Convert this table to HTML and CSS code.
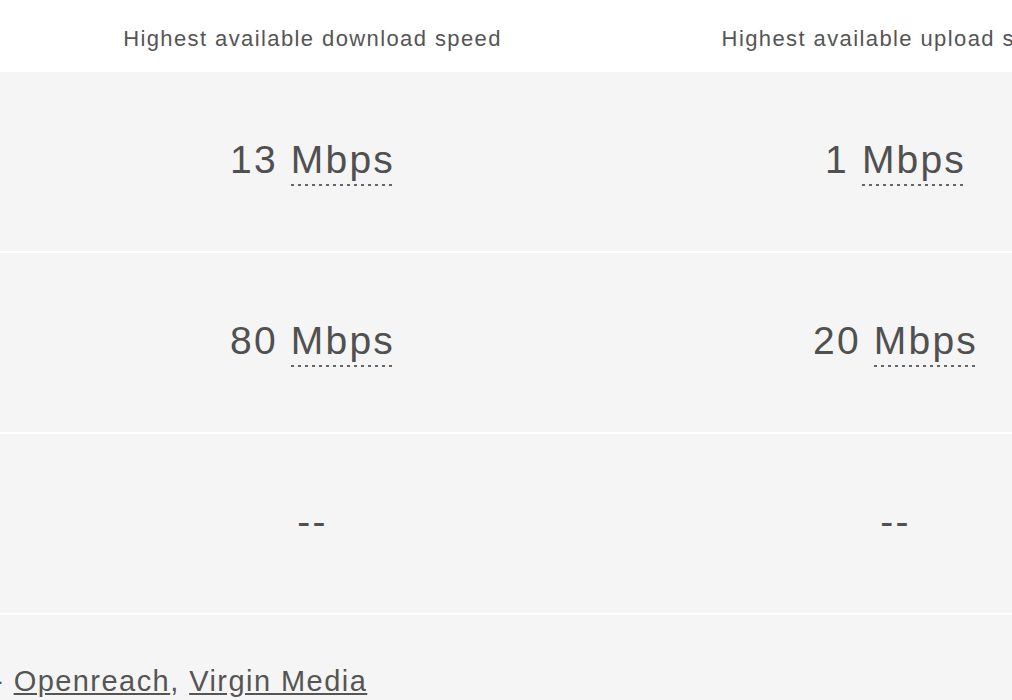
FILE: index.html
```html
<!DOCTYPE html>
<html lang="en">
<head>
    <meta charset="UTF-8">
    <meta name="viewport" content="width=device-width, initial-scale=1.0">
    <title>Broadband speeds</title>
    <link rel="stylesheet" href="styles.css">
</head>
<body>
    <div class="speeds">
        <div class="row head">
            <div class="gutter"></div>
            <div class="cell">Highest available download speed</div>
            <div class="cell">Highest available upload speed</div>
        </div>
        <div class="row">
            <div class="gutter"></div>
            <div class="cell value"><span>13 <abbr title="Megabits per second">Mbps</abbr></span></div>
            <div class="cell value"><span>1 <abbr title="Megabits per second">Mbps</abbr></span></div>
        </div>
        <div class="row">
            <div class="gutter"></div>
            <div class="cell value"><span>80 <abbr title="Megabits per second">Mbps</abbr></span></div>
            <div class="cell value"><span>20 <abbr title="Megabits per second">Mbps</abbr></span></div>
        </div>
        <div class="row">
            <div class="gutter"></div>
            <div class="cell value"><span>--</span></div>
            <div class="cell value"><span>--</span></div>
        </div>
        <div class="providers">
            <p>- <a href="#">Openreach</a>, <a href="#">Virgin Media</a></p>
        </div>
    </div>
</body>
</html>
```

FILE: styles.css
```css
html, body {
    margin: 0;
    padding: 0;
    overflow: hidden;
}
body {
    background-color: #f5f5f5;
    color: #555;
    font-family: 'Liberation Sans', Arial, sans-serif;
    width: 1012px;
    height: 700px;
}
.speeds {
    width: 1187px;
}
.row {
    display: grid;
    grid-template-columns: 21px 583px 583px;
    height: 179px;
    border-bottom: 2px solid #fff;
}
.head {
    background-color: #fff;
    height: 72px;
    border-bottom: none;
    font-size: 22px;
    letter-spacing: 1.4px;
    color: #555;
}
.cell {
    display: flex;
    justify-content: center;
    align-items: center;
    white-space: nowrap;
}
.head .cell {
    padding-top: 6px;
}
.value {
    font-size: 39px;
    letter-spacing: 2.2px;
    color: #505050;
    padding-bottom: 3px;
}
abbr {
    text-decoration: none;
    padding-bottom: 5px;
    background: linear-gradient(to right, #666 3px, transparent 3px) repeat-x left bottom / 7px 2px;
}
.providers {
    height: 90px;
}
.providers p {
    margin: 0;
    padding-top: 50px;
    margin-left: -7px;
    font-size: 29px;
    letter-spacing: 1.45px;
    color: #555;
}
.providers a {
    color: #555;
}
```
